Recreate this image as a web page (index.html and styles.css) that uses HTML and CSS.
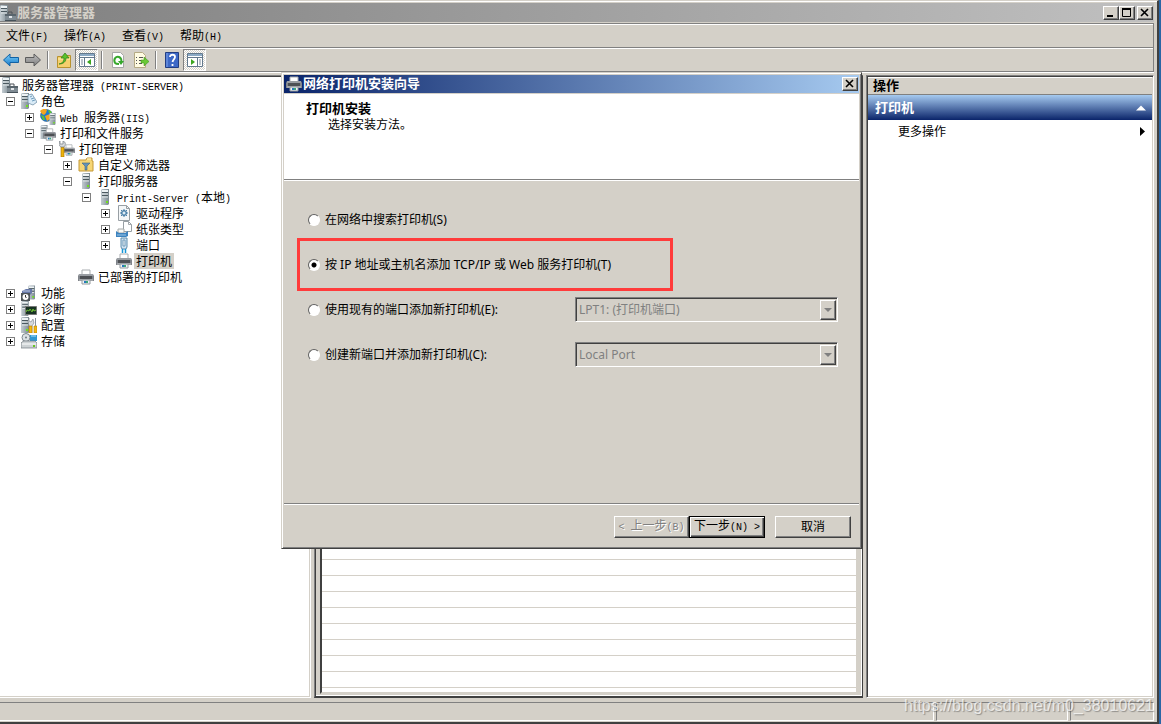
FILE: index.html
```html
<!DOCTYPE html>
<html lang="zh-CN">
<head>
  <meta charset="UTF-8">
  <meta name="viewport" content="width=device-width, initial-scale=1.0">
  <title>服务器管理器</title>
  <link rel="stylesheet" href="styles.css">
</head>
<body>

  <!-- icon set -->
  <svg class="sprite" aria-hidden="true">
    <defs>
      <linearGradient id="steel" x1="0" x2="1" y1="0" y2="0"><stop offset="0" stop-color="#c3ccd1"/><stop offset="1" stop-color="#7c8a92"/></linearGradient>
      <linearGradient id="blue" x1="0" x2="0" y1="0" y2="1"><stop offset="0" stop-color="#7fd0fa"/><stop offset="1" stop-color="#1478c8"/></linearGradient>
      <linearGradient id="grey" x1="0" x2="0" y1="0" y2="1"><stop offset="0" stop-color="#c0c0c0"/><stop offset="1" stop-color="#7d7d7d"/></linearGradient>
    </defs>
    <symbol id="tower" viewBox="0 0 8 16">
      <path d="M0 1 1 0h7v15l-1 1H0z" fill="url(#steel)"/>
      <path d="M1 1h6v2H1z" fill="#eef3f5"/>
      <path d="M1 3.500h6M1 6.500h6" stroke="#4b5960"/>
      <path d="M1 5h6M1 8h6" stroke="#e2e8ea"/>
      <path d="M5 12h2v2H5z" fill="#6fe01c"/>
    </symbol>
    <symbol id="server" viewBox="0 0 16 16"><use href="#tower" x="4" width="8" height="16"/></symbol>
    <symbol id="manager" viewBox="0 0 16 16">
      <use href="#tower" width="8" height="16"/>
      <path d="M8 9V7h4v2" fill="none" stroke="#4c5358"/>
      <path d="M5 9h11v6H5z" fill="#7f8b93"/><path d="M5 9h11v2H5z" fill="#59656d"/>
      <path d="M5 15.500h11" stroke="#46525a"/><path d="M9 11h3v2H9z" fill="#e3e7ea"/>
    </symbol>
    <symbol id="roles" viewBox="0 0 16 16">
      <use href="#tower" width="8" height="16"/>
      <path d="m7 2 4-1 5 8-4 3-5-2z" fill="#d9ebf7" stroke="#7492a8" stroke-width=".8"/>
      <path d="m9 4 2-1m-1 3 3-1m-2 3 3-1" stroke="#6f9dbd"/>
    </symbol>
    <symbol id="web" viewBox="0 0 16 16">
      <circle cx="6.500" cy="6.500" r="6" fill="#1d79cf" stroke="#315f85" stroke-width=".6"/>
      <path d="M0 2c3-3 6-2 7-1L6 4 4 6 2 5zM5 7l5-2v5l-3 2z" fill="#f2a521"/>
      <path d="M1 6l3 1 1 4-2 0zM8 1l3 1 1 3-3-1z" fill="#5dc332"/>
      <use href="#tower" x="9" y="4" width="7" height="12"/>
    </symbol>
    <symbol id="printer" viewBox="0 0 16 16">
      <path d="M4 1h8v6H4z" fill="#fff" stroke="#a9adb0"/>
      <path d="M0 7l1-2h14l1 2v5H0z" fill="#81858b"/>
      <path d="M1 6h14" stroke="#b1b5b9"/>
      <path d="M2 7h12v3H2z" fill="#4d5054"/>
      <path d="M1 11h14" stroke="#c3c6c8"/>
      <path d="M4 11h8v4H4z" fill="#eef3f6" stroke="#949a9e"/>
      <path d="M6 12h2v2H6z" fill="#2879be"/><path d="M8 12h2v2H8z" fill="#3da878"/>
    </symbol>
    <symbol id="print-service" viewBox="0 0 16 16">
      <use href="#tower" width="8" height="14"/><use href="#printer" x="3" y="3" width="13" height="13"/>
    </symbol>
    <symbol id="print-management" viewBox="0 0 16 16">
      <use href="#printer" x="4" y="3" width="12" height="12"/>
      <path d="M2 6h3v10H2z" fill="#edb40b" stroke="#a56e00" stroke-width=".6"/>
      <path d="M1 0v3h3V0c3 1 3 4 1 6H2C0 5-1 2 1 0z" fill="#d5d9dc" stroke="#757c82" stroke-width=".7"/>
    </symbol>
    <symbol id="filter" viewBox="0 0 16 16">
      <path d="M1 14V3h7l1-2h5v3h1v10z" fill="#f6d675" stroke="#c49837"/>
      <path d="M9 2h4" stroke="#fff8cf"/>
      <path d="M4 6h8L9 9v4H7V9z" fill="#6594b8" stroke="#42647e" stroke-width=".6"/>
    </symbol>
    <symbol id="driver" viewBox="0 0 16 16">
      <path d="M2.500.5h8l3 3v12h-11z" fill="#f5f7f8" stroke="#989fa4"/>
      <path d="M10.500.5v3h3" fill="none" stroke="#989fa4"/>
      <path d="M8 4v8M4 8h8M5 5l6 6m0-6-6 6" stroke="#4d83ac"/>
      <circle cx="8" cy="8" r="2.500" fill="#88b3d2" stroke="#467aa0"/><circle cx="8" cy="8" r="1" fill="#fff"/>
    </symbol>
    <symbol id="paper" viewBox="0 0 16 16">
      <path d="M7.500.5h5l3 3v7h-8z" fill="#fff" stroke="#989fa4"/>
      <path d="M12.500.5v3h3" fill="none" stroke="#a4a9ad"/>
      <path d="M2 8h6v4H2z" fill="#f8f8f5" stroke="#a4a8a8"/>
      <path d="M0 10l3 2h6l3-2v5l-2 1H0z" fill="#3d83bf"/><path d="M1 14h9" stroke="#9dc6e6"/>
    </symbol>
    <symbol id="port" viewBox="0 0 16 16">
      <path d="M5 1h6v9l-1 2H6l-1-2z" fill="#cfe2f2" stroke="#5d8cac"/>
      <path d="M7 3h2v6H7z" fill="#fff" stroke="#6f99b7"/>
      <path d="M6.500 12v4m3-4v4" stroke="#1596d8" stroke-width="1.500"/>
    </symbol>
    <symbol id="features" viewBox="0 0 16 16">
      <use href="#tower" x="7" width="7" height="15"/>
      <path d="M1 6l4-2h6v4l-3 3H1z" fill="#6778a7"/><path d="M2 6h7" stroke="#bac7e2"/>
      <path d="M0 8h9v8H0z" fill="#4e5559"/><circle cx="4.500" cy="12" r="3" fill="#fff"/><path d="M4.500 10v2l1 1" fill="none" stroke="#333"/>
    </symbol>
    <symbol id="diagnostics" viewBox="0 0 16 16">
      <use href="#tower" width="8" height="15"/>
      <path d="M4.500 5.500h11v8h-11z" fill="#173323" stroke="#777"/>
      <path d="M5 11l1-2 2 1 1-2 2 3 1-3 1 2 2-1" fill="none" stroke="#6dbb33"/>
    </symbol>
    <symbol id="configuration" viewBox="0 0 16 16">
      <use href="#tower" width="8" height="16"/>
      <path d="M8 1v3l2 1 2-3 1 4-2 3v7H8V9L7 4z" fill="#d6dadd" stroke="#788087" stroke-width=".6"/>
      <path d="M8 9h3v7H8zM13 9h3v7h-3z" fill="#f6b811" stroke="#b37e00" stroke-width=".6"/><path d="M14.500 1v8" stroke="#889199"/>
    </symbol>
    <symbol id="storage" viewBox="0 0 16 16">
      <circle cx="5" cy="4.500" r="4" fill="#dce2e5" stroke="#7c868c"/><circle cx="5" cy="4.500" r="1" fill="#6f7b82"/>
      <path d="M9 2h7v6H9z" fill="#3197d0"/><path d="M10 3h5" stroke="#a9e0fa"/>
      <path d="M1 9l2-1h11l2 2v5H0v-5z" fill="#cdd2d4" stroke="#71797e" stroke-width=".7"/><path d="M1 11h14" stroke="#fff"/><path d="M12 12h2v2h-2z" fill="#67c621"/>
    </symbol>
    <symbol id="back" viewBox="0 0 16 16"><path d="M.5 8 7 2v3.500h8.500v5H7V14z" fill="url(#blue)" stroke="#1262a4"/></symbol>
    <symbol id="forward" viewBox="0 0 16 16"><path d="M15.500 8 9 2v3.500H.5v5H9V14z" fill="url(#grey)" stroke="#5c5c5c"/></symbol>
    <symbol id="up-folder" viewBox="0 0 16 16">
      <path d="M1.500 15.500v-11h5l1-1h7v12z" fill="#f5cf6c" stroke="#b8922f"/>
      <path d="M2 7h12" stroke="#fff0ae"/>
      <path d="M3 12c4-1 5-3 5-6H5l4-5 4 5h-3c0 4-3 6-7 6z" fill="#59c22b" stroke="#2c7d17" stroke-width=".7"/>
    </symbol>
    <symbol id="pane-left" viewBox="0 0 16 16">
      <path d="M.5 1.500h15v13H.5z" fill="#fff" stroke="#63788c"/><path d="M1 3h14" stroke="#8baac5" stroke-width="2"/>
      <path d="M1 5.500h14M5.500 6v9" stroke="#63788c"/><path d="M2 8h2m-2 2h2m-2 2h2" stroke="#789"/>
      <path d="M12 7v6l-4-3z" fill="#3ba51f"/>
    </symbol>
    <symbol id="pane-right" viewBox="0 0 16 16">
      <path d="M.5 1.500h15v13H.5z" fill="#fff" stroke="#63788c"/><path d="M1 3h14" stroke="#8baac5" stroke-width="2"/>
      <path d="M1 5.500h14M10.500 6v9" stroke="#63788c"/><path d="M12 8h2m-2 2h2m-2 2h2" stroke="#789"/>
      <path d="M4 7v6l4-3z" fill="#3ba51f"/>
    </symbol>
    <symbol id="refresh" viewBox="0 0 16 16">
      <path d="M2.500.5h8l3 3v12h-11z" fill="#fff" stroke="#a6a6a6"/>
      <path d="M5 11C3 7 6 4 9 5c2 1 3 3 2 5M5 11c1 1 3 1 4 1" fill="none" stroke="#36a72b" stroke-width="2"/>
      <path d="M8 9h6l-3 4z" fill="#36a72b"/>
    </symbol>
    <symbol id="export" viewBox="0 0 16 16">
      <path d="M1.500.5h8l3 3v12h-11z" fill="#fffbe2" stroke="#b5aa84"/>
      <path d="M3 5.500h1m2 0h4M3 8.500h1m2 0h3M3 11.500h1m2 0h3" stroke="#555"/>
      <path d="M8 8h3V5l5 4.500-5 4.500v-3H8z" fill="#69c936" stroke="#358b18" stroke-width=".5"/>
    </symbol>
    <symbol id="help" viewBox="0 0 16 16">
      <path d="M1.500.5h13v15h-13z" fill="#3d68c6" stroke="#213d82"/><path d="M3 1v14" stroke="#7fa2ea"/>
      <path d="M6 5c0-3 5-3 5 0 0 2-2 2-2.500 5M8.500 12v2" fill="none" stroke="#fff" stroke-width="1.800"/>
    </symbol>
  </svg>

  <div class="window">
    <header class="title-bar">
      <svg class="icon"><use href="#manager"/></svg>
      <h1>服务器管理器</h1>
      <div class="caption-buttons">
        <button type="button" class="caption-button" aria-label="最小化"><svg viewBox="0 0 12 10"><path d="M2 8h6" stroke="#000" stroke-width="2"/></svg></button>
        <button type="button" class="caption-button" aria-label="最大化"><svg viewBox="0 0 12 10"><path d="M1.500 1v7.500h8V1M1 1h9" fill="none" stroke="#000"/><path d="M1 1h9" stroke="#000" stroke-width="2"/></svg></button>
        <button type="button" class="caption-button close" aria-label="关闭"><svg viewBox="0 0 12 10"><path d="m2 1 7 7m0-7-7 7" stroke="#000" stroke-width="1.600"/></svg></button>
      </div>
    </header>

    <nav class="menu-bar">
      <button type="button">文件<span class="latin">(F)</span></button>
      <button type="button">操作<span class="latin">(A)</span></button>
      <button type="button">查看<span class="latin">(V)</span></button>
      <button type="button">帮助<span class="latin">(H)</span></button>
    </nav>

    <div class="toolbar">
      <button type="button" aria-label="后退"><svg class="icon"><use href="#back"/></svg></button>
      <button type="button" aria-label="前进"><svg class="icon"><use href="#forward"/></svg></button>
      <span class="divider"></span>
      <button type="button" aria-label="向上"><svg class="icon"><use href="#up-folder"/></svg></button>
      <button type="button" class="pressed" aria-label="控制台树"><svg class="icon"><use href="#pane-left"/></svg></button>
      <span class="divider"></span>
      <button type="button" aria-label="刷新"><svg class="icon"><use href="#refresh"/></svg></button>
      <button type="button" aria-label="导出列表"><svg class="icon"><use href="#export"/></svg></button>
      <span class="divider"></span>
      <button type="button" aria-label="帮助"><svg class="icon"><use href="#help"/></svg></button>
      <button type="button" class="pressed" aria-label="操作窗格"><svg class="icon"><use href="#pane-right"/></svg></button>
    </div>

    <main class="panes">
      <section class="tree-pane">
        <div class="row root"><svg class="icon"><use href="#manager"/></svg><span class="label">服务器管理器<span class="latin"> (PRINT-SERVER)</span></span></div>
        <ul class="tree">
          <li>
            <div class="row"><button type="button" class="expander open" aria-label="折叠"></button><svg class="icon"><use href="#roles"/></svg><span class="label">角色</span></div>
            <ul>
              <li><div class="row"><button type="button" class="expander" aria-label="展开"></button><svg class="icon"><use href="#web"/></svg><span class="label"><span class="latin">Web </span>服务器<span class="latin">(IIS)</span></span></div></li>
              <li>
                <div class="row"><button type="button" class="expander open" aria-label="折叠"></button><svg class="icon"><use href="#print-service"/></svg><span class="label">打印和文件服务</span></div>
                <ul>
                  <li>
                    <div class="row"><button type="button" class="expander open" aria-label="折叠"></button><svg class="icon"><use href="#print-management"/></svg><span class="label">打印管理</span></div>
                    <ul>
                      <li><div class="row"><button type="button" class="expander" aria-label="展开"></button><svg class="icon"><use href="#filter"/></svg><span class="label">自定义筛选器</span></div></li>
                      <li>
                        <div class="row"><button type="button" class="expander open" aria-label="折叠"></button><svg class="icon"><use href="#server"/></svg><span class="label">打印服务器</span></div>
                        <ul>
                          <li>
                            <div class="row"><button type="button" class="expander open" aria-label="折叠"></button><svg class="icon"><use href="#server"/></svg><span class="label"><span class="latin">Print-Server (</span>本地<span class="latin">)</span></span></div>
                            <ul>
                              <li><div class="row"><button type="button" class="expander" aria-label="展开"></button><svg class="icon"><use href="#driver"/></svg><span class="label">驱动程序</span></div></li>
                              <li><div class="row"><button type="button" class="expander" aria-label="展开"></button><svg class="icon"><use href="#paper"/></svg><span class="label">纸张类型</span></div></li>
                              <li><div class="row"><button type="button" class="expander" aria-label="展开"></button><svg class="icon"><use href="#port"/></svg><span class="label">端口</span></div></li>
                              <li><div class="row leaf"><svg class="icon"><use href="#printer"/></svg><span class="label selected">打印机</span></div></li>
                            </ul>
                          </li>
                        </ul>
                      </li>
                      <li><div class="row leaf"><svg class="icon"><use href="#printer"/></svg><span class="label">已部署的打印机</span></div></li>
                    </ul>
                  </li>
                </ul>
              </li>
            </ul>
          </li>
          <li><div class="row"><button type="button" class="expander" aria-label="展开"></button><svg class="icon"><use href="#features"/></svg><span class="label">功能</span></div></li>
          <li><div class="row"><button type="button" class="expander" aria-label="展开"></button><svg class="icon"><use href="#diagnostics"/></svg><span class="label">诊断</span></div></li>
          <li><div class="row"><button type="button" class="expander" aria-label="展开"></button><svg class="icon"><use href="#configuration"/></svg><span class="label">配置</span></div></li>
          <li><div class="row"><button type="button" class="expander" aria-label="展开"></button><svg class="icon"><use href="#storage"/></svg><span class="label">存储</span></div></li>
        </ul>
      </section>

      <section class="result-pane">
        <div class="printer-list"></div>
      </section>

      <aside class="actions-pane">
        <h2>操作</h2>
        <button type="button" class="action-group">打印机 <svg viewBox="0 0 10 6"><path d="M0 5.500 5 .5l5 5z" fill="#fff"/></svg></button>
        <button type="button" class="action">更多操作 <svg viewBox="0 0 5 10"><path d="M0 0v9l5-4.500z"/></svg></button>
      </aside>
    </main>

    <footer class="status-bar">
      <div class="field wide"></div>
      <div class="field"></div>
      <div class="field small"></div>
    </footer>
  </div>

  <form class="dialog" role="dialog" aria-labelledby="dialog-title">
    <div class="title-bar active">
      <svg class="icon"><use href="#printer"/></svg>
      <h2 id="dialog-title">网络打印机安装向导</h2>
      <div class="caption-buttons">
        <button type="button" class="caption-button close" aria-label="关闭"><svg viewBox="0 0 12 10"><path d="m2 1 7 7m0-7-7 7" stroke="#000" stroke-width="1.600"/></svg></button>
      </div>
    </div>
    <div class="dialog-header">
      <h3>打印机安装</h3>
      <p>选择安装方法。</p>
    </div>
    <div class="options">
      <div class="option">
        <input type="radio" name="method" id="search"><label for="search">在网络中搜索打印机(S)</label>
      </div>
      <div class="option highlighted">
        <input type="radio" name="method" id="by-ip" checked><label for="by-ip">按 IP 地址或主机名添加 TCP/IP 或 Web 服务打印机(T)</label>
      </div>
      <div class="option">
        <input type="radio" name="method" id="existing"><label for="existing">使用现有的端口添加新打印机(E):</label>
        <div class="combo">
          <select aria-label="现有端口" disabled><option>LPT1: (打印机端口)</option></select>
          <span class="combo-arrow"></span>
        </div>
      </div>
      <div class="option">
        <input type="radio" name="method" id="create"><label for="create">创建新端口并添加新打印机(C):</label>
        <div class="combo">
          <select aria-label="端口类型" disabled><option>Local Port</option></select>
          <span class="combo-arrow"></span>
        </div>
      </div>
    </div>
    <div class="dialog-buttons">
      <button type="button" class="push" disabled><span class="latin">&lt; </span>上一步<span class="latin">(B)</span></button>
      <button type="button" class="push default">下一步<span class="latin">(N) &gt;</span></button>
      <button type="button" class="push cancel">取消</button>
    </div>
  </form>

  <div class="watermark">https://blog.csdn.net/m0_38010621</div>

</body>
</html>
```

FILE: styles.css
```css
* {
  box-sizing: border-box;
}

body {
  margin: 0;
  height: 100vh;
  padding-right: 2px;
  background: #2b66a5;
  color: #000;
  font-family: "Liberation Sans", "Noto Sans CJK SC", sans-serif;
  font-size: 12px;
  line-height: 16px;
  overflow: hidden;
}

h1, h2, h3, p, ul {
  margin: 0;
  padding: 0;
}

button {
  padding: 0;
  border: 0;
  background: none;
  color: inherit;
  font: inherit;
}

svg {
  display: block;
}

.sprite {
  position: absolute;
  width: 0;
  height: 0;
}

.icon {
  flex: none;
  width: 16px;
  height: 16px;
}

.latin {
  font-family: "Liberation Mono", monospace;
  font-size: 10px;
  white-space: pre;
}

/* main window */
.window {
  display: flex;
  flex-direction: column;
  height: 100%;
  padding: 2px 3px 0 0;
  background: #d4d0c8;
  border-top: 1px solid #d4d0c8;
  border-right: 2px solid #404040;
  border-bottom: 2px solid #404040;
  box-shadow: inset 0 1px #fff;
}

.title-bar {
  display: flex;
  align-items: center;
  flex: none;
  gap: 1px;
  height: 19px;
  padding-right: 1px;
  background: linear-gradient(90deg, #808080, #c0c0c0);
  color: #d4d0c8;
}

.title-bar h1,
.title-bar h2 {
  font-size: 13px;
  line-height: 16px;
  font-weight: bold;
}

.title-bar.active {
  height: 18px;
  padding-left: 2px;
  background: linear-gradient(90deg, #0a246a, #a6caf0);
  color: #fff;
}

.caption-buttons {
  display: flex;
  margin-left: auto;
}

.caption-button {
  width: 16px;
  height: 14px;
  border: 1px solid;
  border-color: #fff #404040 #404040 #fff;
  background: #d4d0c8;
  box-shadow: inset -1px -1px #808080;
}

.caption-button svg {
  width: 12px;
  height: 10px;
  margin-left: 1px;
}

.window .close {
  margin-left: 2px;
}

.menu-bar {
  display: flex;
  align-items: center;
  flex: none;
  gap: 16px;
  height: 24px;
  padding: 3px 6px 0;
  margin-top: 1px;
  border-top: 1px solid #808080;
  border-right: 1px solid #808080;
  box-shadow: inset 0 1px #fff;
}

.toolbar {
  display: flex;
  align-items: center;
  flex: none;
  height: 25px;
  padding-top: 1px;
  border: 1px solid #808080;
  border-left: 0;
  box-shadow: inset 0 1px #fff, 0 1px #fff;
}

.toolbar button {
  display: flex;
  align-items: center;
  justify-content: center;
  width: 23px;
  height: 22px;
}

.toolbar button:first-child {
  width: 21px;
}

.toolbar .pressed {
  border: 1px solid;
  border-color: #808080 #fff #fff #808080;
  background: repeating-conic-gradient(#fff 0 25%, #d4d0c8 0 50%) 0 0 / 2px 2px;
}

.divider {
  width: 2px;
  height: 18px;
  margin: 0 3px;
  border-left: 1px solid #808080;
  border-right: 1px solid #fff;
}

/* three panes */
.panes {
  display: flex;
  flex: 1;
  gap: 3px;
  min-height: 0;
  margin-top: 3px;
}

.tree-pane,
.result-pane,
.actions-pane {
  border-top: 1px solid #808080;
  border-bottom: 1px solid #fff;
  border-right: 1px solid #fff;
}

.tree-pane {
  flex: none;
  width: 311px;
  background: #fff;
  box-shadow: inset 0 1px #404040, inset -1px -1px #d4d0c8;
  padding-top: 1px;
}

.tree ul {
  padding-left: 19px;
}

.tree,
.tree ul {
  list-style: none;
}

.row {
  display: flex;
  align-items: center;
  height: 16px;
  padding-left: 6px;
  white-space: nowrap;
}

.row.root {
  padding-left: 2px;
}

.row.leaf {
  padding-left: 21px;
}

.expander {
  flex: none;
  width: 9px;
  height: 9px;
  margin-right: 6px;
  border: 1px solid #808080;
  background:
    linear-gradient(#000, #000) center / 5px 1px no-repeat,
    linear-gradient(#000, #000) center / 1px 5px no-repeat,
    #fff;
}

.expander.open {
  background: linear-gradient(#000, #000) center / 5px 1px no-repeat, #fff;
}

.label {
  height: 16px;
  margin-left: 2px;
  padding: 0 2px;
  line-height: 18px;
}

.selected {
  background: #d4d0c8;
}

.result-pane {
  flex: 1;
  padding: 5px 4px 2px 5px;
  border-left: 1px solid #808080;
  border-bottom: 2px solid #404040;
  border-right: 1px solid #404040;
  box-shadow: inset 1px 1px #404040, inset -1px -1px #fff;
}

.printer-list {
  height: 100%;
  border: 2px solid;
  border-color: #404040 #d4d0c8 #d4d0c8 #404040;
  background: repeating-linear-gradient(#fff 0 15px, #d4d0c8 15px 16px) 0 15px;
  background-origin: border-box;
  background-size: 100% 1600px;
}

.actions-pane {
  flex: none;
  width: 288px;
  border-left: 1px solid #808080;
  background: #fff;
  box-shadow: inset 1px 1px #404040, inset -1px -1px #d4d0c8;
  padding: 2px 1px 0;
}

.actions-pane h2 {
  height: 17px;
  padding-left: 5px;
  background: #d4d0c8;
  border-bottom: 1px solid #808080;
  font-size: 13px;
  line-height: 16px;
}

.action-group,
.action {
  display: flex;
  align-items: center;
  justify-content: space-between;
  width: 100%;
  height: 24px;
  padding: 0 6px 0 7px;
}

.action-group {
  height: 25px;
  background: linear-gradient(#a6caf0, #0a246a);
  color: #fff;
  font-size: 13px;
  font-weight: bold;
}

.action-group svg {
  width: 10px;
  height: 6px;
}

.action {
  padding: 0 7px 0 30px;
}

.action svg {
  width: 5px;
  height: 10px;
}

.status-bar {
  display: flex;
  flex: none;
  gap: 2px;
  height: 19px;
  margin: 4px 0 1px;
}

.field {
  width: 132px;
  border: 1px solid;
  border-color: #808080 #fff #fff #808080;
}

.field.wide {
  flex: 1;
  border-left: 0;
}

.field.small {
  width: 84px;
}

/* wizard */
.dialog {
  position: absolute;
  left: 281px;
  top: 72px;
  display: flex;
  flex-direction: column;
  width: 581px;
  height: 477px;
  padding: 1px;
  border: 1px solid;
  border-color: #d4d0c8 #404040 #404040 #d4d0c8;
  background: #d4d0c8;
  box-shadow: inset 1px 1px #fff, inset -1px -1px #808080;
}

.dialog .title-bar {
  margin: 1px 1px 0;
}

.dialog-header {
  height: 86px;
  margin: 1px 1px 0;
  padding: 7px 22px;
  border-bottom: 1px solid #808080;
  background: #fff;
}

.dialog-header h3 {
  font-size: 13px;
  line-height: 16px;
}

.dialog-header p {
  padding-left: 22px;
}

.options {
  flex: 1;
  margin: 0 1px;
  padding: 16px 13px;
  border-top: 1px solid #fff;
  border-bottom: 1px solid #808080;
  font-family: "Noto Sans", "Noto Sans CJK SC", sans-serif;
}

.option {
  display: flex;
  align-items: center;
  height: 45px;
  padding: 0 8px 0 11px;
}

.highlighted {
  position: relative;
}

.highlighted::after {
  content: "";
  position: absolute;
  inset: -4px 173px -4px 0;
  border: 3px solid #ff3b3b;
}

.option input {
  flex: none;
  appearance: none;
  width: 12px;
  height: 12px;
  margin: 0 5px 0 0;
  border: 1px solid;
  border-color: #606060 #fff #fff #606060;
  border-radius: 50%;
  background: #fff;
}

.option input:checked {
  background: radial-gradient(circle, #000 0 2px, #fff 3px);
}

.combo {
  display: flex;
  width: 263px;
  height: 25px;
  margin-left: auto;
  border: 1px solid;
  border-color: #808080 #fff #fff #808080;
  box-shadow: inset 1px 1px #404040;
  padding: 2px 1px 1px 2px;
}

.combo select {
  flex: 1;
  appearance: none;
  padding: 0 1px;
  border: 0;
  background: none;
  color: #808080;
  font: inherit;
  opacity: 1;
}

.combo-arrow {
  display: flex;
  align-items: center;
  justify-content: center;
  width: 16px;
  border: 1px solid;
  border-color: #fff #404040 #404040 #fff;
  box-shadow: inset -1px -1px #808080;
}

.combo-arrow::before {
  content: "";
  border: 4px solid transparent;
  border-top-color: #808080;
  border-bottom: 0;
}

.dialog-buttons {
  display: flex;
  justify-content: flex-end;
  height: 43px;
  margin: 0 1px;
  padding: 11px 8px 9px;
  border-top: 1px solid #fff;
}

.push {
  width: 75px;
  height: 22px;
  border: 1px solid;
  border-color: #fff #404040 #404040 #fff;
  box-shadow: inset -1px -1px #808080;
  white-space: nowrap;
}

.push:disabled {
  color: #808080;
  text-shadow: 1px 1px #fff;
}

.push.default {
  width: 76px;
  border: 1px solid #000;
  box-shadow: inset 1px 1px #fff, inset -1px -1px #404040, inset -2px -2px #808080;
}

.push.cancel {
  margin-left: 10px;
  width: 76px;
}

.watermark {
  position: absolute;
  right: 7px;
  bottom: 9px;
  color: rgba(255, 255, 255, 0.7);
  font-size: 16px;
  line-height: 18px;
  text-shadow: 1px 1px 1px rgba(80, 80, 80, 0.5);
}
```
